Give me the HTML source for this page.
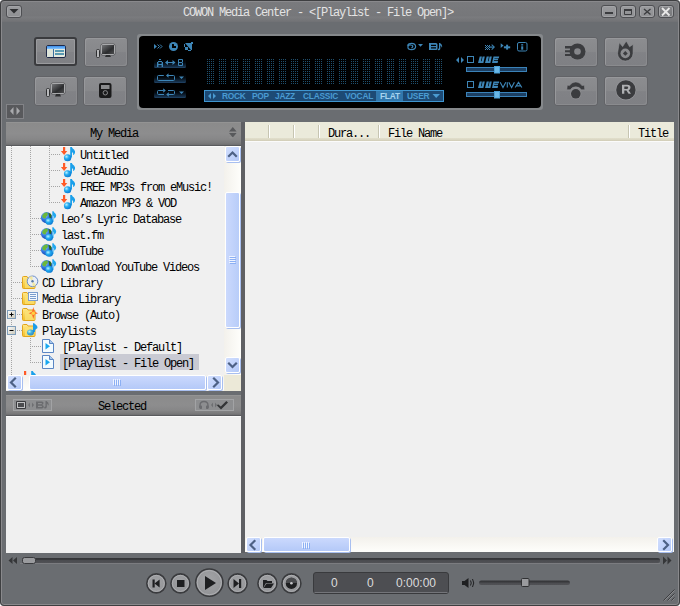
<!DOCTYPE html>
<html><head><meta charset="utf-8">
<style>
*{margin:0;padding:0;box-sizing:border-box}
html,body{width:680px;height:606px;overflow:hidden;background:#fff}
.a{position:absolute}
#win{position:absolute;left:0;top:0;width:680px;height:606px;background:#6a6d71;border-radius:4px;overflow:hidden}
#frame{position:absolute;left:0;top:0;width:680px;height:606px;border:1px solid #3e3f41;border-radius:4px;box-shadow:inset 0 0 0 1px #89898c;pointer-events:none}
.mono{font-family:"Liberation Mono",monospace;font-size:12px;letter-spacing:-1.2px;white-space:pre}
.sans{font-family:"Liberation Sans",sans-serif}
.wbtn{position:absolute;top:5px;width:16px;height:12.5px;border:1px solid #4e4f53;border-radius:3px;background:linear-gradient(#9a9b9e,#8f9093);box-shadow:inset 0 0 0 1px #a3a4a7}
.gbtn{position:absolute;border-radius:3px;background:linear-gradient(#8c8d90 0,#87888b 50%,#818286 52%,#7f8084 100%);box-shadow:inset 1px 1px 0 #97989b,inset -1px -1px 0 #8a8b8e,0 0 0 1px #626367}
.disp{left:137px;top:34px;width:406px;height:76px;background:#85888b;border-radius:3px}
.dispin{left:139px;top:36px;width:402px;height:72px;background:#000;border-radius:4px}
.pane{background:#f0f0f0;box-shadow:inset 0 1px 0 #fbfbfb}
.hdr{background:linear-gradient(#979797 0,#8b8b8b 1.5px,#8d8d8e 50%,#878788 75%,#7a7a7b 92%,#6e6e70 100%);border-bottom:1px solid #595a5d}
.tr{color:#000;line-height:16px}
.eq{font-family:"Liberation Sans",sans-serif;font-weight:bold;font-size:8.4px;letter-spacing:-0.25px;color:#4a9bd2;position:absolute;top:91px;line-height:10px;white-space:pre}

.sbtrack{position:absolute;background:linear-gradient(90deg,#f3f1ec,#fefefb)}
.sbtrackh{position:absolute;background:linear-gradient(180deg,#f3f1ec,#fefefb)}
.sbb{position:absolute;border:1px solid #fff;border-radius:2px;background:linear-gradient(135deg,#d2dffe 0%,#c0d2fb 60%,#b3c8f7 100%);box-shadow:1px 1px 0 #a8bff0}
.sbth{position:absolute;border:1px solid #fff;border-radius:2px;background:linear-gradient(90deg,#cbd9fd,#b8cdf9);box-shadow:1px 1px 0 #a8bff0}
.sbthh{position:absolute;border:1px solid #fff;border-radius:2px;background:linear-gradient(180deg,#cbd9fd,#b4c9f8);box-shadow:1px 1px 0 #a8bff0}
</style></head><body>
<div id="win">

  <div class="a" style="left:0;top:0;width:680px;height:22px;background:linear-gradient(#7a7b7e 0,#77787b 12px,#76777a 16px,#7b7c7f 17px,#78797c 18px,#737477 21px,#6f7074 22px)"></div>
  <div class="wbtn" style="left:6px;top:5px;width:16px;height:13px"></div>
  <div class="a mono" style="left:183px;top:5.6px;color:#e4e4e4;line-height:14px">COWON Media Center - &lt;[Playlist - File Open]&gt;</div>
  <div class="wbtn" style="left:601px"></div>
  <div class="wbtn" style="left:620px"></div>
  <div class="wbtn" style="left:639px"></div>
  <div class="wbtn" style="left:658px;background:linear-gradient(#858689,#77787b)"></div>


  <div class="gbtn" style="left:34px;top:37px;width:43px;height:29px;border:2px solid #3a3b3e;box-shadow:inset 0 0 0 1px #9a9b9e"></div>
  <div class="gbtn" style="left:85px;top:38px;width:42px;height:28px"></div>
  <div class="gbtn" style="left:35px;top:77px;width:42px;height:28px"></div>
  <div class="gbtn" style="left:84px;top:77px;width:42px;height:28px"></div>
  <div class="a" style="left:6px;top:104px;width:18px;height:15px;background:#58595c;box-shadow:inset 0 0 0 1px #828387"></div>
  <div class="gbtn" style="left:555px;top:38px;width:42px;height:28px"></div>
  <div class="gbtn" style="left:605px;top:38px;width:42px;height:28px"></div>
  <div class="gbtn" style="left:555px;top:77px;width:42px;height:28px"></div>
  <div class="gbtn" style="left:605px;top:77px;width:42px;height:28px"></div>


  <div class="a disp"></div><div class="a dispin"></div>
<svg class="a" style="left:0;top:0" width="680" height="606" viewBox="0 0 680 606">
<defs>
<pattern id="dots" x="207" y="59" width="2" height="2" patternUnits="userSpaceOnUse"><rect width="1" height="1" fill="#1f4f6d"/></pattern>
<linearGradient id="btng" x1="0" y1="0" x2="0" y2="1"><stop offset="0" stop-color="#000"/><stop offset="0.4" stop-color="#040a10"/><stop offset="0.85" stop-color="#15304a"/><stop offset="1" stop-color="#22466a"/></linearGradient>
</defs>
<rect x="207" y="59" width="8" height="26" fill="url(#dots)"/>
<rect x="219" y="59" width="8" height="26" fill="url(#dots)"/>
<rect x="231" y="59" width="8" height="26" fill="url(#dots)"/>
<rect x="243" y="59" width="8" height="26" fill="url(#dots)"/>
<rect x="255" y="59" width="8" height="26" fill="url(#dots)"/>
<rect x="267" y="59" width="8" height="26" fill="url(#dots)"/>
<rect x="279" y="59" width="8" height="26" fill="url(#dots)"/>
<rect x="291" y="59" width="8" height="26" fill="url(#dots)"/>
<rect x="303" y="59" width="8" height="26" fill="url(#dots)"/>
<rect x="315" y="59" width="8" height="26" fill="url(#dots)"/>
<rect x="327" y="59" width="8" height="26" fill="url(#dots)"/>
<rect x="339" y="59" width="8" height="26" fill="url(#dots)"/>
<rect x="351" y="59" width="8" height="26" fill="url(#dots)"/>
<rect x="363" y="59" width="8" height="26" fill="url(#dots)"/>
<rect x="375" y="59" width="8" height="26" fill="url(#dots)"/>
<rect x="387" y="59" width="8" height="26" fill="url(#dots)"/>
<rect x="399" y="59" width="8" height="26" fill="url(#dots)"/>
<rect x="411" y="59" width="8" height="26" fill="url(#dots)"/>
<rect x="423" y="59" width="8" height="26" fill="url(#dots)"/>
<rect x="435" y="59" width="8" height="26" fill="url(#dots)"/>
<path d="M154 44 L157 46.5 L154 49 Z" fill="#3d85b6"/>
<g fill="none" stroke="#3d85b6" stroke-width="1">
 <path d="M157.5 44.5 L159.5 46.5 L157.5 48.5 M160 44.5 L162 46.5 L160 48.5"/>
</g>
<circle cx="173.5" cy="46.5" r="4.5" fill="#3d85b6"/>
<path d="M172 44 H174 V46 H176 V48 H172 Z" fill="#000"/>
<g fill="#3d85b6">
 <rect x="184" y="44" width="1" height="3"/>
 <path d="M185 43 H192 V50 H191 Z"/>
 <rect x="185" y="47" width="3" height="3"/>
 <rect x="188" y="50" width="3" height="1"/>
 <rect x="191" y="42" width="2" height="2"/>
</g>
<rect x="154" y="59" width="32" height="9" rx="1.5" fill="url(#btng)"/>
<rect x="154" y="74" width="32" height="9" rx="1.5" fill="url(#btng)"/>
<rect x="154" y="89" width="32" height="9" rx="1.5" fill="url(#btng)"/>
<g fill="none" stroke="#3d85b6" stroke-width="1">
 <path d="M178.5 59.5 H182.5 V62 M178.5 62.5 H182.5 M182.5 63 V65.5 H178.5 V59.5" stroke-linejoin="miter"/>
 <path d="M166 62.5 H174"/>
 <path d="M163.8 75.5 H158.5 Q157.5 75.5 157.5 76.5 V79.5 Q157.5 80.5 158.5 80.5 H173.5 Q174.5 80.5 174.5 79.5 V76.5 Q174.5 75.5 173.5 75.5 H167"/>
 <path d="M163.5 90.5 H158.5 Q157.5 90.5 157.5 91.5 V93.5 Q157.5 94.5 158.5 94.5 H164 M168 90.5 H173.5 Q174.5 90.5 174.5 91.5 V93.5 Q174.5 94.5 173.5 94.5 H168"/>
</g>
<path d="M179 76.5 H184 L181.5 79 Z M179 91.5 H184 L181.5 94 Z" fill="#3d85b6"/>
<g fill="#3d85b6"><rect x="159" y="59" width="2" height="1"/><rect x="158" y="61" width="4" height="1"/><rect x="157" y="62" width="1.4" height="5"/><rect x="161.6" y="62" width="1.4" height="5"/><rect x="157" y="64" width="6" height="1"/>
<path d="M165 62.5 L168 60 V65 Z M175.5 62.5 L172.5 60 V65 Z"/></g>
<path d="M166 75.5 L168.5 73.3 V77.7 Z M165.8 90.5 L163.2 88.3 V92.7 Z M166.2 94.5 L168.8 92.3 V96.7 Z" fill="#3d85b6"/>
<!-- EQ bar -->
<rect x="204.5" y="90.5" width="239" height="11" fill="#1d4a75" stroke="#3f95d0" stroke-width="1"/>
<rect x="376" y="91" width="27" height="10" fill="#3278ad"/>
<path d="M211 93 L208 96 L211 99 Z M213 93 L216 96 L213 99 Z" fill="#4a9bd2"/>
<path d="M432.5 94 H440 L436.2 98 Z" fill="#4a9bd2"/>
</svg>
  <div class="eq" style="left:222px">ROCK</div>
  <div class="eq" style="left:252px">POP</div>
  <div class="eq" style="left:275px">JAZZ</div>
  <div class="eq" style="left:303px">CLASSIC</div>
  <div class="eq" style="left:345px">VOCAL</div>
  <div class="eq" style="left:380px;color:#a8d4f0">FLAT</div>
  <div class="eq" style="left:407px">USER</div>


  <div class="a hdr" style="left:6px;top:122px;width:235px;height:24px"></div>
  <div class="a mono" style="left:90px;top:127px;color:#000;line-height:14px">My Media</div>
  <div class="a pane" style="left:6px;top:146px;width:235px;height:245px"></div>
  <div class="a hdr" style="left:6px;top:395px;width:235px;height:21px"></div>
  <div class="a mono" style="left:98px;top:400px;color:#000;line-height:14px">Selected</div>
  <div class="a pane" style="left:6px;top:416px;width:235px;height:137px"></div>
  <div class="a" style="left:241px;top:122px;width:4px;height:431px;background:#5f6064"></div>
  <div class="a" style="left:245px;top:122px;width:429px;height:19px;background:linear-gradient(#ebeadb 0,#ebeadb 16px,#e2dfcc 16px,#d9d5c1 18px,#cfcab4 19px)"></div>
  <div class="a pane" style="left:245px;top:141px;width:429px;height:396px"></div>
  <div class="a" style="left:245px;top:537px;width:429px;height:15px;background:#fbfaf6"></div>

<div class="sbtrack" style="left:224px;top:146px;width:17px;height:229px"></div><div class="sbb" style="left:225px;top:146px;width:15px;height:16px"></div><div class="sbth" style="left:225px;top:192px;width:15px;height:136px"></div><div class="sbb" style="left:225px;top:357px;width:15px;height:16px"></div><div class="sbtrackh" style="left:6px;top:375px;width:218px;height:15px"></div><div class="sbb" style="left:7px;top:375px;width:15px;height:15px"></div><div class="sbthh" style="left:29px;top:375px;width:177px;height:15px"></div><div class="sbb" style="left:207px;top:375px;width:15px;height:15px"></div><div class="a" style="left:224px;top:375px;width:17px;height:16px;background:#ece9d8"></div><div class="sbtrackh" style="left:245px;top:537px;width:429px;height:15px"></div><div class="sbb" style="left:246px;top:537px;width:15px;height:15px"></div><div class="sbthh" style="left:263px;top:537px;width:87px;height:15px"></div><div class="sbb" style="left:657px;top:537px;width:15px;height:15px"></div>
<div class="a" style="left:6px;top:146px;width:218px;height:229px;overflow:hidden"><div class="a" style="left:-6px;top:-146px;width:680px;height:606px"><div class="a mono tr" style="left:80px;top:148px">Untitled</div>
<div class="a mono tr" style="left:80px;top:164px">JetAudio</div>
<div class="a mono tr" style="left:80px;top:180px">FREE MP3s from eMusic!</div>
<div class="a mono tr" style="left:80px;top:196px">Amazon MP3 &amp; VOD</div>
<div class="a mono tr" style="left:61px;top:212px">Leo’s Lyric Database</div>
<div class="a mono tr" style="left:61px;top:228px">last.fm</div>
<div class="a mono tr" style="left:61px;top:244px">YouTube</div>
<div class="a mono tr" style="left:61px;top:260px">Download YouTube Videos</div>
<div class="a mono tr" style="left:42px;top:276px">CD Library</div>
<div class="a mono tr" style="left:42px;top:292px">Media Library</div>
<div class="a mono tr" style="left:42px;top:308px">Browse (Auto)</div>
<div class="a mono tr" style="left:42px;top:324px">Playlists</div>
<div class="a mono tr" style="left:62px;top:340px">[Playlist - Default]</div>
<div class="a" style="left:60px;top:354px;width:139px;height:16px;background:#c9cad3"></div>
<div class="a mono tr" style="left:62px;top:356px">[Playlist - File Open]</div><svg class="a" style="left:0;top:0" width="680" height="606" viewBox="0 0 680 606"><defs>
<linearGradient id="boxg" x1="0" y1="0" x2="1" y2="1"><stop offset="0" stop-color="#fff"/><stop offset="1" stop-color="#c6c5b6"/></linearGradient>
<radialGradient id="ballg" cx="0.35" cy="0.35" r="0.7"><stop offset="0" stop-color="#b8f0ff"/><stop offset="0.45" stop-color="#22aaf0"/><stop offset="1" stop-color="#0a78d0"/></radialGradient>
<radialGradient id="globeg" cx="0.35" cy="0.3" r="0.8"><stop offset="0" stop-color="#8ec8ff"/><stop offset="0.5" stop-color="#2f74e0"/><stop offset="1" stop-color="#1a3fa0"/></radialGradient>
<linearGradient id="foldg" x1="0" y1="0" x2="0" y2="1"><stop offset="0" stop-color="#ffe98a"/><stop offset="1" stop-color="#f3bf28"/></linearGradient>
<symbol id="i_note" width="16" height="16" viewBox="0 0 16 16" overflow="visible">
 <path d="M2 1 H4.2 V5 H6.3 L3.1 9 L-0.1 5 H2 Z" fill="#ff5a26"/>
 <path d="M9.2 1 L10.8 1 Q11.5 2.5 13 3.5 Q14.5 5 14 7 Q13.5 8.5 12 9.3 Q12.8 7 11 6 L11 11.5 L9.2 11.5 Z" fill="#1ba0ea"/>
 <ellipse cx="6.6" cy="11.7" rx="3.7" ry="3.5" fill="url(#ballg)"/>
</symbol>
<symbol id="i_globe" width="17" height="16" viewBox="0 0 17 16" overflow="visible">
 <circle cx="5.5" cy="7.6" r="5.6" fill="url(#globeg)"/>
 <path d="M1.5 5 Q3 2.2 6 2.2 Q7.5 3.5 6.5 5.5 Q5 6 4.5 8.5 Q2.5 8.5 1.2 7 Z" fill="#6cb83a"/>
 <path d="M7.5 3 Q9.5 3 10.5 5 Q10.5 7.5 9.3 8.5 Q8 7 8 5.5 Z" fill="#2d6a1a"/>
 <path d="M11.3 1.3 L12.5 1.3 Q13.1 2.5 14.4 3.6 Q15.8 5.2 14.8 7 Q14.2 8 13 8.6 Q13.6 6.8 12.5 5.5 L12.5 12 L11.3 12 Z" fill="#22a8f0"/>
 <ellipse cx="8.2" cy="11.4" rx="3.8" ry="3.4" fill="url(#ballg)"/>
</symbol>
<symbol id="i_folder" width="16" height="16" viewBox="0 0 16 16" overflow="visible">
 <path d="M0.5 3.5 Q0.5 2.5 1.5 2.5 H5 L6 4 H12 Q13 4 13 5 V13.5 Q13 14.5 12 14.5 H1.5 Q0.5 14.5 0.5 13.5 Z" fill="url(#foldg)" stroke="#e2a41c"/>
 <path d="M3 6 H12.5 V14 H3 Z" fill="#fbe47a" opacity="0.7"/>
</symbol>
<symbol id="i_cd" width="16" height="16" viewBox="0 0 16 16" overflow="visible">
 <use href="#i_folder"/>
 <circle cx="10.5" cy="7.3" r="5.3" fill="#e8eef6" stroke="#6a8cc8"/>
 <path d="M10.5 7.3 L7 3.5 A5 5 0 0 1 10.5 2.2 Z M10.5 7.3 L14 11 A5 5 0 0 1 10.5 12.3 Z" fill="#f4e8a0"/>
 <circle cx="10.5" cy="7.3" r="1.2" fill="#5a7aa8"/>
</symbol>
<symbol id="i_media" width="16" height="16" viewBox="0 0 16 16" overflow="visible">
 <use href="#i_folder"/>
 <rect x="6.5" y="2.5" width="9" height="8" fill="#f4f8ff" stroke="#7a9ccc"/>
 <path d="M8 4.5 H14 M8 6.5 H14 M8 8.5 H14" stroke="#7a9ccc"/>
</symbol>
<symbol id="i_browse" width="16" height="16" viewBox="0 0 16 16" overflow="visible">
 <use href="#i_folder"/>
 <path d="M11.3 1 L12.6 5.8 L16 7.2 L12.6 8.6 L11.3 13 L10 8.6 L6.6 7.2 L10 5.8 Z" fill="#ff6a2a"/>
 <circle cx="11.3" cy="7.2" r="1.8" fill="#ffd040"/>
</symbol>
<symbol id="i_playlists" width="16" height="16" viewBox="0 0 16 16" overflow="visible">
 <use href="#i_folder"/>
 <path d="M11 1 L12.5 1.5 Q15.5 3.5 15.5 6 L13 8 L13 10 L11 10 Z" fill="#1b9cea"/>
 <ellipse cx="8.5" cy="10.5" rx="3.5" ry="3" fill="url(#ballg)" opacity="0.85"/>
</symbol>
<symbol id="i_pl" width="16" height="16" viewBox="0 0 16 16" overflow="visible">
 <path d="M1.5 1.5 H8.5 L12.5 5.5 V14.5 H1.5 Z" fill="#f2fbff" stroke="#5a86c4"/>
 <path d="M8.5 1.5 V5.5 H12.5" fill="#a8c8ec" stroke="#5a86c4"/>
 <path d="M4.5 5 L9 8.2 L4.5 11.5 Z" fill="#18a8f0"/>
</symbol>
</defs><clipPath id="treeclip"><rect x="6" y="146" width="218" height="229"/></clipPath><g clip-path="url(#treeclip)"><path d="M11.5 146 V375" stroke="#a5a5a5" stroke-width="1" stroke-dasharray="1 1" fill="none"/>
<path d="M30.5 146 V267" stroke="#a5a5a5" stroke-width="1" stroke-dasharray="1 1" fill="none"/>
<path d="M49.5 146 V203" stroke="#a5a5a5" stroke-width="1" stroke-dasharray="1 1" fill="none"/>
<path d="M30.5 338 V363" stroke="#a5a5a5" stroke-width="1" stroke-dasharray="1 1" fill="none"/>
<path d="M51 154.5 H61" stroke="#a5a5a5" stroke-width="1" stroke-dasharray="1 1" fill="none"/>
<use href="#i_note" x="61" y="146"/>
<path d="M51 170.5 H61" stroke="#a5a5a5" stroke-width="1" stroke-dasharray="1 1" fill="none"/>
<use href="#i_note" x="61" y="162"/>
<path d="M51 186.5 H61" stroke="#a5a5a5" stroke-width="1" stroke-dasharray="1 1" fill="none"/>
<use href="#i_note" x="61" y="178"/>
<path d="M51 202.5 H61" stroke="#a5a5a5" stroke-width="1" stroke-dasharray="1 1" fill="none"/>
<use href="#i_note" x="61" y="194"/>
<path d="M32 218.5 H41" stroke="#a5a5a5" stroke-width="1" stroke-dasharray="1 1" fill="none"/>
<use href="#i_globe" x="41" y="210"/>
<path d="M32 234.5 H41" stroke="#a5a5a5" stroke-width="1" stroke-dasharray="1 1" fill="none"/>
<use href="#i_globe" x="41" y="226"/>
<path d="M32 250.5 H41" stroke="#a5a5a5" stroke-width="1" stroke-dasharray="1 1" fill="none"/>
<use href="#i_globe" x="41" y="242"/>
<path d="M32 266.5 H41" stroke="#a5a5a5" stroke-width="1" stroke-dasharray="1 1" fill="none"/>
<use href="#i_globe" x="41" y="258"/>
<path d="M13 282.5 H22" stroke="#a5a5a5" stroke-width="1" stroke-dasharray="1 1" fill="none"/>
<use href="#i_cd" x="22" y="274"/>
<path d="M13 298.5 H22" stroke="#a5a5a5" stroke-width="1" stroke-dasharray="1 1" fill="none"/>
<use href="#i_media" x="22" y="290"/>
<path d="M13 314.5 H22" stroke="#a5a5a5" stroke-width="1" stroke-dasharray="1 1" fill="none"/>
<use href="#i_browse" x="22" y="306"/>
<path d="M13 330.5 H22" stroke="#a5a5a5" stroke-width="1" stroke-dasharray="1 1" fill="none"/>
<use href="#i_playlists" x="22" y="322"/>
<path d="M32 346.5 H41" stroke="#a5a5a5" stroke-width="1" stroke-dasharray="1 1" fill="none"/>
<use href="#i_pl" x="41" y="338"/>
<path d="M32 362.5 H41" stroke="#a5a5a5" stroke-width="1" stroke-dasharray="1 1" fill="none"/>
<use href="#i_pl" x="41" y="354"/>
<path d="M13 378.5 H22" stroke="#a5a5a5" stroke-width="1" stroke-dasharray="1 1" fill="none"/>
<use href="#i_note" x="22" y="370"/>
<rect x="7.5" y="310.5" width="8" height="8" fill="url(#boxg)" stroke="#7f9db9"/><path d="M9.5 314.5 H13.5 M11.5 312.5 V316.5" stroke="#000"/>
<rect x="7.5" y="326.5" width="8" height="8" fill="url(#boxg)" stroke="#7f9db9"/><path d="M9.5 330.5 H13.5" stroke="#000"/></g></svg></div></div>
<svg class="a" style="left:0;top:0" width="680" height="606" viewBox="0 0 680 606"><g fill="none" stroke="#4d6185" stroke-width="2.2" stroke-linecap="square">
<path d="M229 156 L232.5 152.5 L236 156"/>
<path d="M229 363.5 L232.5 367 L236 363.5"/>
<path d="M15 378.5 L11 382.5 L15 386.5"/>
<path d="M214 378.5 L218 382.5 L214 386.5"/>
<path d="M254.5 541 L250.5 545 L254.5 549"/>
<path d="M664 541 L668 545 L664 549"/>
</g>
<g stroke-width="1">
<path d="M229 256.5 H235 M229 258.5 H235 M229 260.5 H235 M229 262.5 H235" stroke="#eef3ff"/>
<path d="M230 257.5 H236 M230 259.5 H236 M230 261.5 H236 M230 263.5 H236" stroke="#8cb0f4"/>
<path d="M113.5 379 V385 M115.5 379 V385 M117.5 379 V385 M119.5 379 V385" stroke="#eef3ff"/>
<path d="M114.5 380 V386 M116.5 380 V386 M118.5 380 V386 M120.5 380 V386" stroke="#8cb0f4"/>
<path d="M302.5 542 V548 M304.5 542 V548 M306.5 542 V548 M308.5 542 V548" stroke="#eef3ff"/>
<path d="M303.5 543 V549 M305.5 543 V549 M307.5 543 V549 M309.5 543 V549" stroke="#8cb0f4"/>
</g></svg>
<svg class="a" style="left:0;top:0" width="680" height="606" viewBox="0 0 680 606">
<defs>
<linearGradient id="tb" x1="0" y1="0" x2="0" y2="1"><stop offset="0" stop-color="#3a8ce8"/><stop offset="1" stop-color="#86c6ff"/></linearGradient>
<linearGradient id="scr" x1="0" y1="0" x2="1" y2="1"><stop offset="0" stop-color="#7a7b7e"/><stop offset="0.6" stop-color="#2a2b2d"/><stop offset="1" stop-color="#505153"/></linearGradient>
</defs>
<!-- menu triangle -->
<path d="M9.5 9 H18.5 L14 13.5 Z" fill="#2e2f31"/>
<!-- window buttons -->
<rect x="605" y="12" width="8" height="2" fill="#3b3c3f"/>
<path d="M624.5 9.5 H631.5 V14.5 H624.5 Z" fill="none" stroke="#3b3c3f"/><rect x="624" y="9" width="8" height="2" fill="#3b3c3f"/>
<path d="M644 9 L650.5 14.5 M650.5 9 L644 14.5" stroke="#3b3c3f" stroke-width="1.4"/>
<path d="M662 8 L669.5 15.5 M669.5 8 L662 15.5" stroke="#e8e8e8" stroke-width="1.8"/>
<!-- button 1 icon: window -->
<rect x="46.5" y="45.5" width="19" height="12" rx="1.5" fill="#e6ebe0" stroke="#1f2a4a"/>
<rect x="47" y="46" width="18" height="3" fill="url(#tb)"/>
<rect x="47" y="49" width="6" height="8" fill="#dde4da"/>
<rect x="53" y="49" width="1" height="8" fill="#3a70a0"/>
<rect x="55" y="50" width="9" height="2" fill="#5a9ab2"/>
<rect x="55" y="53" width="9" height="2" fill="#5a9ab2"/>
<!-- button 2 icon: tower+monitor -->
<rect x="96.5" y="49.5" width="3" height="8" rx="1" fill="#b8b9bb" stroke="#2e2f31"/>
<rect x="101.5" y="44.5" width="13" height="10" rx="1" fill="url(#scr)" stroke="#d8d9da"/>
<rect x="101" y="44" width="14" height="11" rx="1.5" fill="none" stroke="#3a3b3d" stroke-width="0.6"/>
<path d="M106 55 H110 L111 57 H105 Z" fill="#2e2f31"/>
<!-- button 3 icon -->
<rect x="46.5" y="88.5" width="3" height="8" rx="1" fill="#b8b9bb" stroke="#2e2f31"/>
<rect x="51.5" y="83.5" width="13" height="10" rx="1" fill="url(#scr)" stroke="#d8d9da"/>
<rect x="51" y="83" width="14" height="11" rx="1.5" fill="none" stroke="#3a3b3d" stroke-width="0.6"/>
<path d="M56 94 H60 L61 96.5 H55 Z" fill="#2e2f31"/>
<!-- button 4 icon: player -->
<rect x="99" y="83" width="12.5" height="15" rx="2" fill="#1a1a1b"/>
<rect x="101" y="85" width="8.5" height="4" fill="#8a8b8d"/>
<circle cx="105.3" cy="92.8" r="2.2" fill="none" stroke="#8a8b8d" stroke-width="1"/>
<!-- right button icons -->
<circle cx="577.5" cy="51.5" r="8" fill="#3b3c3f"/>
<circle cx="577.5" cy="51.5" r="3.3" fill="#85868a"/>
<path d="M565 46 H572 V56 H565 V54 H570 V52.3 H565 V50.3 H570 V48.6 H565 Z" fill="#3b3c3f"/>
<path d="M617.5 53.3 L619.3 42.6 L622.6 46.6 L626.3 41 L629.6 46.8 L633.2 44.3 L633.1 53.3 A7.8 7.8 0 0 1 617.5 53.3 Z" fill="#3b3c3f" stroke="#96979a" stroke-width="0.6"/>
<circle cx="625.3" cy="53.4" r="4.8" fill="#8a8b8e"/>
<path d="M625.3 51 L627.7 53.4 L625.3 55.8 L622.9 53.4 Z" fill="#3b3c3f"/>
<path d="M566.8 89.8 L567.3 85.2 L569.6 85.6 Q572 82 575.8 82 Q579.6 82 582 85.6 L584.3 85.2 L584.8 89.8 L581.2 89.8 Q579.8 86.8 575.8 86.8 Q571.8 86.8 570.4 89.8 Z" fill="#3b3c3f" stroke="#96979a" stroke-width="0.5"/>
<circle cx="575.8" cy="93.8" r="5.6" fill="#8e8f92"/>
<circle cx="575.8" cy="93.8" r="4.8" fill="#3b3c3f"/>
<circle cx="625.9" cy="89.9" r="10.4" fill="#95969a"/>
<circle cx="625.9" cy="89.9" r="9.7" fill="#3b3c3f"/>
<path d="M622 84.8 H627.2 Q630.5 84.8 630.5 87.6 Q630.5 89.7 628.6 90.2 L631 93.8 H628.5 L626.4 90.6 H624.3 V93.8 H622 Z M624.3 86.6 V88.9 H627 Q628.2 88.9 628.2 87.75 Q628.2 86.6 627 86.6 Z" fill="#aeafb2" fill-rule="evenodd"/>
<!-- small arrow btn -->
<path d="M13.5 107 L10 111 L13.5 115 Z M16.5 107 L20 111 L16.5 115 Z" fill="#a9aaad"/>
</svg>
<svg class="a" style="left:0;top:0" width="680" height="606" viewBox="0 0 680 606">
<path d="M407.3 45.6 Q408.6 43.4 411.5 43.4 Q415.6 43.4 415.6 46.6 Q415.6 49.6 411.5 49.6 Q407.9 49.6 407.9 47 Q407.9 45 410.6 45 Q412.8 45 412.8 46.6 Q412.8 47.8 411.3 47.8" fill="none" stroke="#3d85b6" stroke-width="1.2"/>
<path d="M418 44 H423 L420.5 46.8 Z" fill="#3d85b6"/>
<g fill="#3d85b6">
 <path d="M429 43 H436 Q437.5 43 437.5 44.5 V48.5 Q437.5 50 436 50 H429 Z M431 44.7 V45.9 H436 V44.7 Z M431 47.2 V48.4 H436 V47.2 Z" fill-rule="evenodd"/>
 <path d="M439 43 H440 Q442.5 44.5 442.2 47 L441.6 47.4 Q441.5 46 440.3 45.2 V49 Q440 50.3 438.6 50.3 Q437.5 50.2 437.8 49.2 Q438.3 48.3 439 48.5 Z"/>
</g>
<!-- right top icons -->
<g fill="#3d85b6">
 <rect x="485" y="45" width="1" height="1"/><rect x="487" y="45" width="1" height="1"/><rect x="489" y="45" width="1" height="1"/>
 <rect x="486" y="46" width="1" height="1"/><rect x="488" y="46" width="1" height="1"/>
 <rect x="485" y="47" width="1" height="1"/><rect x="487" y="47" width="1" height="1"/><rect x="489" y="47" width="1" height="1"/>
 <rect x="486" y="48" width="1" height="1"/><rect x="488" y="48" width="1" height="1"/>
 <rect x="485" y="49" width="1" height="1"/><rect x="487" y="49" width="1" height="1"/><rect x="489" y="49" width="1" height="1"/>
 <rect x="489" y="46.5" width="5" height="1.2"/>
 <path d="M492 44.3 L495 47.1 L492 49.9 L491.3 49.2 L493.6 47.1 L491.3 45 Z"/>
 <path d="M500.7 43.3 L503.6 45.6 L500.7 47.9 Z"/>
 <rect x="503.9" y="46.3" width="6.3" height="2"/><rect x="506.1" y="44.7" width="2" height="4.9"/>
</g>
<rect x="517.5" y="42.5" width="9.5" height="8.5" rx="1.5" fill="none" stroke="#3d85b6"/>
<rect x="521.2" y="44.2" width="2" height="1.3" fill="#3d85b6"/>
<rect x="521.2" y="46.3" width="2" height="3.4" fill="#3d85b6"/>
<!-- left-right arrows -->
<path d="M459 57 L456 60 L459 63 Z M461 57 L464 60 L461 63 Z" fill="#3d85b6"/>
<!-- checkboxes -->
<rect x="467.5" y="56.5" width="6" height="6" fill="none" stroke="#3d85b6"/>
<rect x="467.5" y="81.5" width="6" height="6" fill="none" stroke="#3d85b6"/>
<!-- UUE logos -->
<g fill="#3d85b6"><path d="M479.7 56.4 H481.9 L480.9 61.199999999999996 H481.6 L482.6 56.4 H484.8 L483.4 62.9 H478 Z M486.7 56.4 H488.9 L487.9 61.199999999999996 H488.6 L489.6 56.4 H491.8 L490.4 62.9 H485 Z M493.5 56.4 H499.2 L498.8 58.3 H494.6 L494.4 58.8 H498.2 L497.9 60.3 H494.1 L493.9 61.0 H498.1 L497.6 62.9 H492 Z"/><path d="M479.7 81.4 H481.9 L480.9 86.2 H481.6 L482.6 81.4 H484.8 L483.4 87.9 H478 Z M486.7 81.4 H488.9 L487.9 86.2 H488.6 L489.6 81.4 H491.8 L490.4 87.9 H485 Z M493.5 81.4 H499.2 L498.8 83.30000000000001 H494.6 L494.4 83.80000000000001 H498.2 L497.9 85.30000000000001 H494.1 L493.9 86.0 H498.1 L497.6 87.9 H492 Z"/></g>
<path d="M500.2 82.3 L503 87.5 L505.8 82.3 M507.3 82.3 V87.5 M508.8 82.3 L511.6 87.5 L514.4 82.3 M515.2 87.5 L518.5 82.3 L521.8 87.5 M516.6 85.9 H520.4" fill="none" stroke="#3d85b6" stroke-width="1.15"/>
<!-- sliders -->
<rect x="466.5" y="67.5" width="60" height="4" fill="#1c3f62" stroke="#3b82b8"/>
<rect x="466.5" y="92.5" width="60" height="4" fill="#1c3f62" stroke="#3b82b8"/>
<rect x="494" y="66" width="6" height="7.5" fill="#4aa0d6"/>
<rect x="495" y="67" width="4" height="5.5" fill="#6ab8e8"/>
<rect x="494" y="91" width="6" height="7.5" fill="#4aa0d6"/>
<rect x="495" y="92" width="4" height="5.5" fill="#6ab8e8"/>
</svg>
<svg class="a" style="left:0;top:0" width="680" height="606" viewBox="0 0 680 606">
<defs>
<radialGradient id="cbg" cx="0.5" cy="0.4" r="0.6"><stop offset="0" stop-color="#a2a3a6"/><stop offset="1" stop-color="#929396"/></radialGradient>
<linearGradient id="trk" x1="0" y1="0" x2="0" y2="1"><stop offset="0" stop-color="#333437"/><stop offset="0.4" stop-color="#3a3b3e"/><stop offset="0.5" stop-color="#4b4c50"/><stop offset="1" stop-color="#515256"/></linearGradient>
</defs>
<!-- seek -->
<path d="M12.5 557 L8.5 560.5 L12.5 564 Z M17 557 L13 560.5 L17 564 Z" fill="#353638"/>
<rect x="20" y="563" width="640" height="1" fill="#7b7c80"/>
<rect x="22" y="558" width="638" height="5" rx="2" fill="url(#trk)"/>
<rect x="22.5" y="557.5" width="13" height="6" rx="2" fill="#9a9b9e" stroke="#3a3b3e"/>
<path d="M663 556.5 L667 560.5 L663 564.5 Z M667.5 556.5 L671.5 560.5 L667.5 564.5 Z" fill="#353638"/>
<circle cx="156.3" cy="583.4" r="9.5" fill="url(#cbg)" stroke="#3a3b3e" stroke-width="1.6"/>
<circle cx="156.3" cy="583.4" r="8.0" fill="none" stroke="#aeafb2" stroke-width="1"/>
<circle cx="180.4" cy="583.4" r="9.5" fill="url(#cbg)" stroke="#3a3b3e" stroke-width="1.6"/>
<circle cx="180.4" cy="583.4" r="8.0" fill="none" stroke="#aeafb2" stroke-width="1"/>
<circle cx="209.3" cy="582.6" r="13.6" fill="url(#cbg)" stroke="#3a3b3e" stroke-width="1.6"/>
<circle cx="209.3" cy="582.6" r="12.100000000000001" fill="none" stroke="#aeafb2" stroke-width="1"/>
<circle cx="237.6" cy="583.4" r="9.5" fill="url(#cbg)" stroke="#3a3b3e" stroke-width="1.6"/>
<circle cx="237.6" cy="583.4" r="8.0" fill="none" stroke="#aeafb2" stroke-width="1"/>
<circle cx="267.4" cy="583.4" r="9.5" fill="url(#cbg)" stroke="#3a3b3e" stroke-width="1.6"/>
<circle cx="267.4" cy="583.4" r="8.0" fill="none" stroke="#aeafb2" stroke-width="1"/>
<circle cx="291.4" cy="583.4" r="9.5" fill="url(#cbg)" stroke="#3a3b3e" stroke-width="1.6"/>
<circle cx="291.4" cy="583.4" r="8.0" fill="none" stroke="#aeafb2" stroke-width="1"/>
<g fill="#1e1f21">
 <rect x="152.5" y="579.5" width="2.2" height="8"/>
 <path d="M159.6 579.5 V587.5 L154.5 583.5 Z"/>
 <rect x="177" y="580" width="7.5" height="7"/>
 <path d="M205 576 V590 L216 583 Z"/>
 <path d="M233.5 579 V588 L239 583.5 Z"/>
 <rect x="239" y="579" width="2.2" height="9"/>
 <path d="M263 580 H266.5 L267.5 581 H272 V583 H266 L263 588 Z"/>
 <path d="M263.5 588 L266.5 583.5 H274 L271 588 Z"/>
 <circle cx="291.4" cy="583.4" r="5.6"/>
</g>
<path d="M285.8 583 A5.6 5.6 0 0 1 297 583 Z" fill="#4a4b4e"/>
<circle cx="291.4" cy="583.2" r="1.3" fill="#c8c9cb"/>
<!-- time display -->
<rect x="313.5" y="572.5" width="135" height="21" rx="2.5" fill="#4d4e52" stroke="#393a3d"/>
<path d="M314.5 592.5 H447.5" stroke="#74757a"/>
<!-- volume -->
<path d="M462 581 H464.5 L468.5 578 V588 L464.5 585 H462 Z" fill="#1e1f21"/>
<path d="M470.5 580.5 Q472 583 470.5 585.5 M472.5 579 Q475 583 472.5 587" fill="none" stroke="#1e1f21" stroke-width="1"/>
<rect x="479" y="580.5" width="91" height="4.5" rx="2.2" fill="url(#trk)"/>
<rect x="521.5" y="578.5" width="7.5" height="8" rx="1" fill="#9a9b9e" stroke="#303133"/>
<!-- grip -->
<path d="M663.5 600.5 L674.5 589.5 M667.5 600.5 L674.5 593.5 M671.5 600.5 L674.5 597.5" stroke="#3c3d40" stroke-width="1"/><path d="M664.5 600.5 L674.5 590.5 M668.5 600.5 L674.5 594.5 M672.5 600.5 L674.5 598.5" stroke="#8a8b8e" stroke-width="1"/>
</svg>
<div class="a sans" style="left:331px;top:576px;font-size:12px;color:#dcdcdc;line-height:14px">0</div>
<div class="a sans" style="left:367px;top:576px;font-size:12px;color:#dcdcdc;line-height:14px">0</div>
<div class="a sans" style="left:396px;top:576px;font-size:12px;color:#dcdcdc;line-height:14px">0:00:00</div>


<div class="a mono" style="left:328px;top:127px;color:#000;line-height:14px">Dura...</div>
<div class="a mono" style="left:388px;top:127px;color:#000;line-height:14px">File Name</div>
<div class="a mono" style="left:638px;top:127px;color:#000;line-height:14px">Title</div>
<svg class="a" style="left:0;top:0" width="680" height="606" viewBox="0 0 680 606">
<g stroke-width="1">
<path d="M268.5 125 V138 M293.5 125 V138 M318.5 125 V138 M378.5 125 V138 M628.5 125 V138" stroke="#c7c5b2"/>
<path d="M269.5 125 V138 M294.5 125 V138 M319.5 125 V138 M379.5 125 V138 M629.5 125 V138" stroke="#ffffff"/>
</g>
<!-- sort arrows -->
<path d="M229 131.5 L232.8 127 L236.6 131.5 Z M229 133 L232.8 137.5 L236.6 133 Z" fill="#58595c"/><path d="M229.5 137.8 L233 137.8" stroke="#9a9a9a" stroke-width="0.6"/>
<!-- selected header buttons -->
<rect x="13.5" y="399.5" width="38" height="11" fill="#8d8e90" stroke="#a2a3a5"/>
<rect x="195.5" y="399.5" width="38" height="11" fill="#8d8e90" stroke="#a2a3a5"/>
<g fill="#57585b">
<path d="M16.5 401.5 h9 v7 h-9 Z" fill="#c0c1c3" stroke="#3a3b3e"/>
<rect x="18" y="403" width="6" height="4" fill="#4a4b4e"/>
<path d="M30 402.5 L28 405 L30 407.5 Z M32 402.5 L34 405 L32 407.5 Z" fill="#6e6f72"/>
<path fill="#6a6b6e" d="M36 401.5 H42 Q43.5 401.5 43.5 403 Q43.5 404.6 42 405 Q43.8 405.2 43.8 406.8 Q43.8 408.5 42 408.5 H36 Z M38 403 V404.3 H41.3 Q42 404.3 42 403.6 Q42 403 41.3 403 Z M38 405.8 V407 H41.3 Q42 407 42 406.4 Q42 405.8 41.3 405.8 Z"/>
<path fill="#6a6b6e" d="M45.5 401 H46.5 Q49 402.5 48.7 405 L48 405.4 Q47.8 404 46.8 403.2 V407 Q46.5 408.6 45 408.6 Q43.8 408.4 44.2 407.4 Q44.8 406.5 45.5 406.6 Z"/>
<path d="M200 408 V405.5 Q200 401.5 204 401.5 Q208 401.5 208 405.5 V408" fill="none" stroke="#6a6b6e" stroke-width="1.4"/>
<rect x="199.5" y="405.5" width="2.5" height="3.5" rx="0.8" fill="#6a6b6e"/><rect x="206" y="405.5" width="2.5" height="3.5" rx="0.8" fill="#6a6b6e"/>
<path d="M213 402.5 L211 405 L213 407.5 Z M215 402.5 L217 405 L215 407.5 Z" fill="#6e6f72"/>
<path d="M218 404.3 L220.8 406.5 L226.3 401 L228 402.5 L221 409.5 L217 405.5 Z" fill="#333436"/>
</g>
</svg>
</div>
<div id="frame"></div>
</body></html>
